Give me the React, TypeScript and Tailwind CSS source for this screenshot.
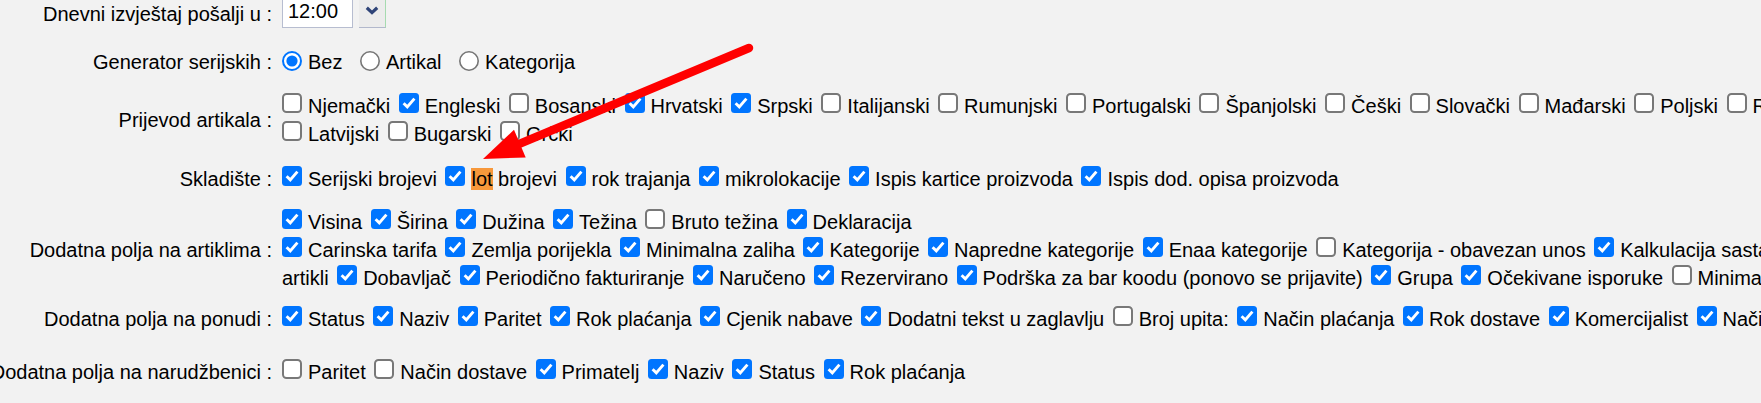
import React from 'react';

type Item = { label: React.ReactNode; on: boolean };

const c = (label: React.ReactNode, on = true): Item => ({ label, on });

const CheckBox: React.FC<{ on: boolean }> = ({ on }) => (
  <svg width="20" height="20" viewBox="0 0 20 20" className="shrink-0 mt-[1px]">
    {on ? (
      <>
        <rect width="20" height="20" rx="3.5" fill="#0075ff" />
        <path d="M4.6 10.3 L8.3 13.9 L15.4 5.6" fill="none" stroke="#fff" strokeWidth="2.9" />
      </>
    ) : (
      <rect x="1" y="1" width="18" height="18" rx="3.5" fill="#fff" stroke="#787878" strokeWidth="2" />
    )}
  </svg>
);

const Radio: React.FC<{ on?: boolean }> = ({ on }) => (
  <svg width="20" height="20" viewBox="0 0 20 20" className="shrink-0 mt-[2.5px]">
    {on ? (
      <>
        <circle cx="10" cy="10" r="9" fill="#fff" stroke="#0075ff" strokeWidth="2" />
        <circle cx="10" cy="10" r="5.6" fill="#0075ff" />
      </>
    ) : (
      <circle cx="10" cy="10" r="9.2" fill="#fff" stroke="#767676" strokeWidth="1.6" />
    )}
  </svg>
);

const Text: React.FC<{ children: React.ReactNode }> = ({ children }) => (
  <span className="mt-[3px] leading-[22px]">{children}</span>
);

const Line: React.FC<{ items: Item[]; lead?: string }> = ({ items, lead }) => (
  <div className="flex items-start h-[28px] whitespace-nowrap gap-[8.5px]">
    {lead && <Text>{lead}</Text>}
    {items.map((it, i) => (
      <span key={i} className="flex items-start gap-[6px]">
        <CheckBox on={it.on} />
        <Text>{it.label}</Text>
      </span>
    ))}
  </div>
);

const Row: React.FC<{ label: string; className?: string; children: React.ReactNode }> = ({ label, className, children }) => (
  <div className={`flex ${className ?? ''}`}>
    <div className="w-[272px] shrink-0 flex justify-end items-center whitespace-nowrap">
      <span className="leading-[22px]">{label}</span>
    </div>
    <div className="ml-[10px] flex flex-col">{children}</div>
  </div>
);

const Arrow = () => (
  <svg className="absolute inset-0 pointer-events-none" width="1761" height="403" viewBox="0 0 1761 403">
    <line x1="749" y1="48" x2="520" y2="143.6" stroke="#ff0000" strokeWidth="8.5" strokeLinecap="round" />
    <polygon points="483,159 514,129.8 525.7,157.4" fill="#ff0000" />
  </svg>
);

export default function App() {
  return (
    <div className="relative w-[1761px] h-[403px] overflow-hidden bg-[#f2f2f2] text-black text-[20px] font-['Liberation_Sans',Arial,sans-serif]">
      <Row label="Dnevni izvještaj pošalji u :">
        <div className="flex items-start h-[28px]">
          <div className="w-[71px] h-[30px] -mt-[2px] bg-white border border-[#b7bdd0] pl-[5px] pt-[1px] leading-[22px]">12:00</div>
          <div className="ml-[6px] w-[27px] h-[30px] -mt-[2px] bg-[#ececec] border-b border-[#b2b8cc] border-r border-r-[#a6dbb0] flex justify-center pt-[8px]">
            <svg width="14" height="9" viewBox="0 0 14 9">
              <path d="M1.8 1.8 L7 6.6 L12.2 1.8" fill="none" stroke="#2f4478" strokeWidth="3.2" />
            </svg>
          </div>
        </div>
      </Row>

      <Row label="Generator serijskih :" className="mt-[20px]">
        <div className="flex items-start h-[28px] whitespace-nowrap gap-[17.5px]">
          <span className="flex items-start gap-[6px]"><Radio on /><Text>Bez</Text></span>
          <span className="flex items-start gap-[6px]"><Radio /><Text>Artikal</Text></span>
          <span className="flex items-start gap-[6px]"><Radio /><Text>Kategorija</Text></span>
        </div>
      </Row>

      <Row label="Prijevod artikala :" className="mt-[16px]">
        <Line
          items={[
            c('Njemački', false), c('Engleski'), c('Bosanski', false), c('Hrvatski'), c('Srpski'),
            c('Italijanski', false), c('Rumunjski', false), c('Portugalski', false), c('Španjolski', false),
            c('Češki', false), c('Slovački', false), c('Mađarski', false), c('Poljski', false), c('Ruski', false),
          ]}
        />
        <Line items={[c('Latvijski', false), c('Bugarski', false), c('Grčki', false)]} />
      </Row>

      <Row label="Skladište :" className="mt-[17px]">
        <Line
          items={[
            c('Serijski brojevi'),
            c(<><span className="bg-[#f7983b]">lot</span> brojevi</>),
            c('rok trajanja'), c('mikrolokacije'), c('Ispis kartice proizvoda'), c('Ispis dod. opisa proizvoda'),
          ]}
        />
      </Row>

      <Row label="Dodatna polja na artiklima :" className="mt-[15px]">
        <Line items={[c('Visina'), c('Širina'), c('Dužina'), c('Težina'), c('Bruto težina', false), c('Deklaracija')]} />
        <Line
          items={[
            c('Carinska tarifa'), c('Zemlja porijekla'), c('Minimalna zaliha'), c('Kategorije'),
            c('Napredne kategorije'), c('Enaa kategorije'), c('Kategorija - obavezan unos', false),
            c('Kalkulacija sastavnice za proizvedene'),
          ]}
        />
        <Line
          lead="artikli"
          items={[
            c('Dobavljač'), c('Periodično fakturiranje'), c('Naručeno'), c('Rezervirano'),
            c('Podrška za bar koodu (ponovo se prijavite)'), c('Grupa'), c('Očekivane isporuke'),
            c('Minimalna narudžba', false),
          ]}
        />
      </Row>

      <Row label="Dodatna polja na ponudi :" className="mt-[13px]">
        <Line
          items={[
            c('Status'), c('Naziv'), c('Paritet'), c('Rok plaćanja'), c('Cjenik nabave'),
            c('Dodatni tekst u zaglavlju'), c('Broj upita:', false), c('Način plaćanja'), c('Rok dostave'),
            c('Komercijalist'), c('Način dostave'),
          ]}
        />
      </Row>

      <Row label="Dodatna polja na narudžbenici :" className="mt-[25px]">
        <Line
          items={[
            c('Paritet', false), c('Način dostave', false), c('Primatelj'), c('Naziv'), c('Status'), c('Rok plaćanja'),
          ]}
        />
      </Row>

      <Arrow />
    </div>
  );
}
